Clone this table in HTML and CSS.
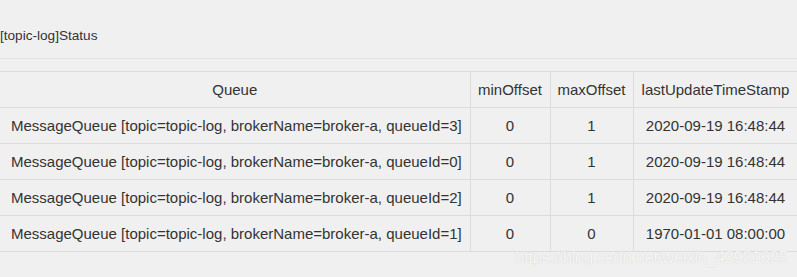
FILE: index.html
```html
<!DOCTYPE html>
<html>
<head>
<meta charset="utf-8">
<link rel="stylesheet" href="styles.css">
</head>
<body>
<div class="modal">
  <div class="modal-header">
    <span class="modal-title">[topic-log]Status</span>
  </div>
  <div class="modal-body">
    <table class="status-table">
      <thead>
        <tr>
          <th class="col-queue">Queue</th>
          <th class="col-min">minOffset</th>
          <th class="col-max">maxOffset</th>
          <th class="col-time">lastUpdateTimeStamp</th>
        </tr>
      </thead>
      <tbody>
        <tr>
          <td class="queue">MessageQueue [topic=topic-log, brokerName=broker-a, queueId=3]</td>
          <td>0</td><td>1</td><td>2020-09-19 16:48:44</td>
        </tr>
        <tr>
          <td class="queue">MessageQueue [topic=topic-log, brokerName=broker-a, queueId=0]</td>
          <td>0</td><td>1</td><td>2020-09-19 16:48:44</td>
        </tr>
        <tr>
          <td class="queue">MessageQueue [topic=topic-log, brokerName=broker-a, queueId=2]</td>
          <td>0</td><td>1</td><td>2020-09-19 16:48:44</td>
        </tr>
        <tr>
          <td class="queue">MessageQueue [topic=topic-log, brokerName=broker-a, queueId=1]</td>
          <td>0</td><td>0</td><td>1970-01-01 08:00:00</td>
        </tr>
      </tbody>
    </table>
  </div>
  <div class="watermark">https://blog.csdn.net/weixin_43931625</div>
</div>
</body>
</html>
```

FILE: styles.css
```css
html, body {
  margin: 0;
  padding: 0;
  background: #f0f0f0;
}
body {
  font-family: "Liberation Sans", Arial, sans-serif;
  font-size: 14px;
  color: #333;
  width: 797px;
  height: 277px;
  overflow: hidden;
}
.modal {
  position: relative;
  height: 277px;
}
.modal-header {
  height: 59px;
  border-bottom: 1px solid #e2e2e2;
  display: flex;
  align-items: center;
  box-sizing: border-box;
  padding-top: 14px;
}
.modal-title {
  font-size: 13.6px;
  line-height: 20px;
}
.modal-body {
  padding-top: 12px;
}
.status-table {
  border-collapse: collapse;
  width: 798px;
  table-layout: fixed;
  font-size: 15px;
}
.status-table th,
.status-table td {
  box-sizing: border-box;
  border: 1px solid #dcdcdc;
  padding: 8px 0;
  line-height: 19px;
  text-align: center;
  font-weight: normal;
  white-space: nowrap;
}
.status-table tr > :first-child {
  border-left: none;
}
.col-queue { width: 470px; }
.col-min { width: 80px; }
.col-max { width: 83px; }
.col-time { width: 165px; }
.status-table td.queue {
  text-align: left;
  padding-left: 11px;
}
.watermark {
  position: absolute;
  left: 515px;
  top: 248px;
  font-size: 17px;
  line-height: 20px;
  letter-spacing: -0.45px;
  white-space: nowrap;
  color: rgba(255, 255, 255, 0.85);
  text-shadow: 0 0 1px rgba(140, 140, 140, 0.45);
}
```
